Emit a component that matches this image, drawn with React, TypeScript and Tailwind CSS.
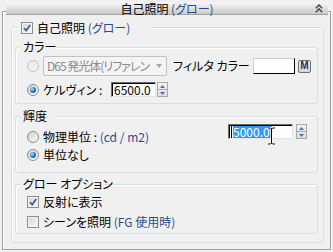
import type { ReactNode } from 'react';

function CheckBox({ checked }: { checked?: boolean }) {
  return (
    <span className="flex h-[12px] w-[12px] shrink-0 items-center justify-center border border-[#8e8f8f] bg-gradient-to-br from-[#d6d6d6] to-[#fafafa] shadow-[inset_0_0_0_1px_#f2f2f2]">
      {checked && (
        <svg width="8" height="8" viewBox="0 0 8 8">
          <path d="M1 4.2 L3.2 6.6 L7.2 1" stroke="#4a5f97" strokeWidth="1.8" fill="none" />
        </svg>
      )}
    </span>
  );
}

function Radio({ checked, disabled }: { checked?: boolean; disabled?: boolean }) {
  return (
    <span
      className={`flex h-[12px] w-[12px] shrink-0 items-center justify-center rounded-full border ${
        disabled
          ? 'border-[#c4c4c4] bg-gradient-to-br from-[#e6e6e6] to-[#f7f7f7]'
          : 'border-[#8d8d8d] bg-gradient-to-br from-[#d2d2d2] to-[#fbfbfb]'
      }`}
    >
      {checked && (
        <span className="h-[6px] w-[6px] rounded-full bg-[radial-gradient(circle_at_35%_35%,#a8e6ff,#1f6cc4_55%,#0b3d8a)]" />
      )}
    </span>
  );
}

function Spinner() {
  return (
    <span className="flex h-[15px] w-[11px] shrink-0 flex-col border border-[#a9a9a9] bg-gradient-to-b from-[#f4f4f4] to-[#dedede]">
      <span className="flex flex-1 items-center justify-center border-b border-[#a9a9a9]">
        <svg width="5" height="3" viewBox="0 0 5 3">
          <path d="M0 3 L2.5 0 L5 3Z" fill="#5070a8" />
        </svg>
      </span>
      <span className="flex flex-1 items-center justify-center">
        <svg width="5" height="3" viewBox="0 0 5 3">
          <path d="M0 0 L5 0 L2.5 3Z" fill="#5070a8" />
        </svg>
      </span>
    </span>
  );
}

function Group({ label, labelClass, className, children }: { label: string; labelClass: string; className: string; children: ReactNode }) {
  return (
    <div className={`relative rounded-[3px] border border-[#d5dfe5] shadow-[inset_1px_1px_0_#ffffff] ${className}`}>
      <span className={`absolute -top-[8px] left-[4px] whitespace-nowrap bg-[#f0f0f0] px-[3px] ${labelClass}`}>{label}</span>
      {children}
    </div>
  );
}

export default function App() {
  return (
    <div className="h-[252px] w-[333px] overflow-hidden bg-[#f0f0f0] pl-[2px] pt-[11px] font-['Noto_Sans_CJK_JP','Noto_Sans',sans-serif] text-[12px] leading-[14px] text-black [font-feature-settings:'palt']">
      <div className="h-[239px] w-[329px] border border-[#a0a0a0] shadow-[inset_1px_1px_0_#ffffff]">
        {/* Rollout title */}
        <div className="relative -mt-[10px] ml-[3px] flex h-[13px] w-[322px] items-center justify-center border-b border-[#a3a3a3] bg-gradient-to-b from-[#f8f8f8] to-[#cacaca]">
          <span className="leading-[13px]">
            自己照明 <span className="text-[#2a4a8e]">(グロー)</span>
          </span>
          <svg className="absolute right-[5px] top-[2px]" width="8" height="9" viewBox="0 0 8 9">
            <path d="M0.8 4.2 L4 1 L7.2 4.2" stroke="#4f4f4f" strokeWidth="1.6" fill="none" />
            <path d="M0.8 8.2 L4 5 L7.2 8.2" stroke="#4f4f4f" strokeWidth="1.6" fill="none" />
          </svg>
        </div>

        {/* Self-illumination group */}
        <div className="relative ml-[8px] mt-[12px] h-[216px] w-[313px] rounded-[3px] border border-[#d5dfe5] px-[3px] pt-[19px] shadow-[inset_1px_1px_0_#ffffff]">
          <span className="absolute -top-[8px] left-[7px] flex h-[15px] w-[133px] items-center gap-[4px] bg-[#f0f0f0] pl-[2px]">
            <CheckBox checked />
            <span className="whitespace-nowrap">
              自己照明 <span className="text-[#2a4a8e]">(グロー)</span>
            </span>
          </span>

          {/* Color */}
          <Group label="カラー" labelClass="w-[37px]" className="h-[57px] w-[303px] pt-[8px]">
            <div className="flex h-[20px] items-center pl-[11px]">
              <Radio disabled />
              <span className="ml-[4px] flex h-[20px] w-[124px] items-center rounded-[2px] border border-[#c2c2c2] bg-[#f4f4f4] pl-[3px] pr-[4px]">
                <span className="whitespace-nowrap tracking-[-1px] text-[#8a8a8a]">D65 発光体(リファレン</span>
                <svg className="ml-auto" width="6" height="4" viewBox="0 0 6 4">
                  <path d="M0 0 L6 0 L3 4Z" fill="#a8a8a8" />
                </svg>
              </span>
              <span className="ml-[6px] w-[80px] whitespace-nowrap">フィルタ カラー :</span>
              <span className="h-[16px] w-[42px] border border-b-black border-l-[#d0d0d0] border-r-black border-t-[#d0d0d0] bg-white" />
              <span className="ml-[3px] flex h-[13px] w-[13px] items-center justify-center rounded-[2px] border border-[#707070] bg-gradient-to-b from-[#f2f2f2] to-[#d4d4d4] font-['Liberation_Sans',sans-serif] text-[10px] font-bold leading-none text-[#1c2f6b]">
                M
              </span>
            </div>
            <div className="mt-[6px] flex h-[15px] items-center pl-[11px]">
              <Radio checked />
              <span className="ml-[4px] w-[68px] whitespace-nowrap">ケルヴィン :</span>
              <span className="flex h-[15px] w-[45px] items-center border border-b-[#e4e4e4] border-l-[#6b6b6b] border-r-[#e4e4e4] border-t-[#6b6b6b] bg-white pl-[2px] shadow-[inset_1px_1px_0_#000000]">
                6500.0
              </span>
              <span className="ml-[1px]">
                <Spinner />
              </span>
            </div>
          </Group>

          {/* Luminance */}
          <Group label="輝度" labelClass="w-[35px]" className="mt-[12px] h-[57px] w-[303px] pt-[7px]">
            <div className="flex items-start pl-[11px] pr-[10px]">
              <div className="mt-[6px] flex items-center">
                <Radio />
                <span className="ml-[4px] whitespace-nowrap">
                  物理単位 : <span className="text-[#2a4a8e]">(cd / m2)</span>
                </span>
              </div>
              <span className="relative ml-auto flex h-[15px] w-[65px] items-center border border-b-[#e4e4e4] border-l-[#6b6b6b] border-r-[#e4e4e4] border-t-[#6b6b6b] bg-white pl-[2px] shadow-[inset_1px_1px_0_#000000]">
                <span className="h-[12px] w-[1px] bg-black" />
                <span className="ml-[1px] bg-[#3399ff] pr-[2px] leading-[12px] text-white">5000.0</span>
                <svg className="absolute left-[38px] top-[2px]" width="9" height="18" viewBox="0 0 9 18">
                  <path d="M1 1 H3.5 L4.5 2 L5.5 1 H8 M4.5 2 V16 M1 17 H3.5 L4.5 16 L5.5 17 H8" stroke="#ffffff" strokeWidth="2.4" fill="none" />
                  <path d="M1 1 H3.5 L4.5 2 L5.5 1 H8 M4.5 2 V16 M1 17 H3.5 L4.5 16 L5.5 17 H8" stroke="#000000" strokeWidth="1" fill="none" />
                </svg>
              </span>
              <span className="ml-[3px]">
                <Spinner />
              </span>
            </div>
            <div className="mt-[4px] flex items-center pl-[11px]">
              <Radio checked />
              <span className="ml-[4px]">単位なし</span>
            </div>
          </Group>

          {/* Glow options */}
          <Group label="グロー オプション" labelClass="w-[83px]" className="mt-[11px] h-[50px] w-[303px] pt-[10px]">
            <div className="flex h-[14px] items-center pl-[11px]">
              <CheckBox checked />
              <span className="ml-[4px]">反射に表示</span>
            </div>
            <div className="mt-[6px] flex h-[14px] items-center pl-[11px]">
              <CheckBox />
              <span className="ml-[4px] whitespace-nowrap">
                シーンを照明 <span className="text-[#2a4a8e]">(FG 使用時)</span>
              </span>
            </div>
          </Group>
        </div>
      </div>
    </div>
  );
}
